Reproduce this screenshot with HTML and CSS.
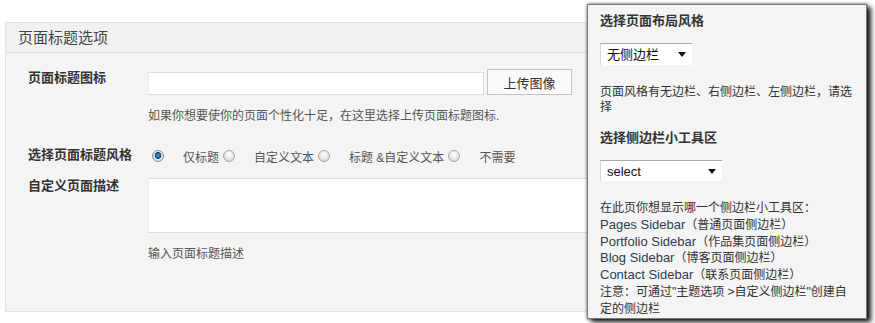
FILE: index.html
```html
<!DOCTYPE html>
<html lang="zh-CN">
<head>
  <meta charset="UTF-8">
  <title>页面标题选项</title>
  <link rel="stylesheet" href="styles.css">
</head>
<body>
  <div class="panel">
    <h3 class="panel-title">页面标题选项</h3>
    <div class="panel-body">
      <!-- 页面标题图标 -->
      <div class="row row-icon">
        <label class="row-label" for="title-icon">页面标题图标</label>
        <div class="row-field">
          <div class="upload">
            <input type="text" id="title-icon" class="text-input">
            <button type="button" class="upload-btn">上传图像</button>
          </div>
          <p class="desc">如果你想要使你的页面个性化十足，在这里选择上传页面标题图标.</p>
        </div>
      </div>

      <!-- 标题风格 -->
      <div class="row row-style">
        <span class="row-label">选择页面标题风格</span>
        <div class="row-field">
          <div class="radios">
            <label class="radio"><input type="radio" name="title-style" checked><span>仅标题</span></label>
            <label class="radio"><input type="radio" name="title-style"><span>自定义文本</span></label>
            <label class="radio"><input type="radio" name="title-style"><span>标题 &amp;自定义文本</span></label>
            <label class="radio"><input type="radio" name="title-style"><span>不需要</span></label>
          </div>
        </div>
      </div>

      <!-- 页面描述 -->
      <div class="row row-desc">
        <label class="row-label" for="title-desc">自定义页面描述</label>
        <div class="row-field">
          <textarea id="title-desc" class="text-area"></textarea>
          <p class="desc">输入页面标题描述</p>
        </div>
      </div>
    </div>
  </div>

  <!-- 侧边栏设置浮层 -->
  <div class="popup">
    <h4 class="popup-title">选择页面布局风格</h4>
    <div class="select select-layout">无侧边栏</div>
    <p class="popup-text">页面风格有无边栏、右侧边栏、左侧边栏，请选择</p>

    <h4 class="popup-title popup-title-2">选择侧边栏小工具区</h4>
    <div class="select select-widget">select</div>
    <p class="popup-list">
      在此页你想显示哪一个侧边栏小工具区：<br>
      <span class="en">Pages Sidebar</span>（普通页面侧边栏）<br>
      <span class="en">Portfolio Sidebar</span>（作品集页面侧边栏）<br>
      <span class="en">Blog Sidebar</span>（博客页面侧边栏）<br>
      <span class="en">Contact Sidebar</span>（联系页面侧边栏）<br>
      注意：可通过"主题选项 &gt;自定义侧边栏"创建自定的侧边栏
    </p>
  </div>
</body>
</html>
```

FILE: styles.css
```css
body {
  margin: 0;
  background-color: #ffffff;
  font-family: "Liberation Sans", "Noto Sans CJK SC", sans-serif;
  color: #333333;
}
.panel {
  margin: 22px 0 0 5px;
  width: 860px;
  border: 1px solid #e2e2e2;
  background-color: #f4f4f4;
}
.panel-title {
  margin: 0;
  height: 29px;
  line-height: 29px;
  padding: 0 12px;
  font-size: 15px;
  font-weight: normal;
  color: #444444;
  background-color: #f1f1f1;
  border-bottom: 1px solid #dddddd;
}
.panel-body {
  padding: 16px 0 49px 22px;
}
.row {
  display: flex;
}
.row-label {
  width: 120px;
  flex-shrink: 0;
  font-size: 13px;
  font-weight: bold;
  line-height: 16px;
  color: #333333;
}
.row-icon .row-label {
  margin-top: 1px;
}
.row-style {
  margin-top: 23px;
}
.row-desc {
  margin-top: 14px;
}
.upload {
  display: flex;
  align-items: flex-end;
}
.text-input {
  width: 336px;
  height: 23px;
  margin: 0;
  box-sizing: border-box;
  border: 1px solid #dddddd;
  border-left-color: #eeeeee;
  background-color: #ffffff;
}
.upload-btn {
  margin: 0 0 0 3px;
  width: 85px;
  height: 26px;
  box-sizing: border-box;
  border: 1px solid #c4c4c4;
  background-color: #fafafa;
  font-family: inherit;
  font-size: 13px;
  color: #333333;
  padding: 0;
}
.desc {
  margin: 13px 0 0;
  font-size: 12px;
  line-height: 16px;
  color: #555555;
}
.radios {
  display: flex;
  align-items: center;
  height: 16px;
  margin-left: 4px;
  margin-top: 1px;
}
.radio {
  display: flex;
  align-items: center;
  font-size: 12px;
  color: #555555;
  margin-right: 4px;
}
.radio input {
  appearance: none;
  -webkit-appearance: none;
  width: 12px;
  height: 12px;
  margin: 0 19px 0 0;
  box-sizing: border-box;
  border-radius: 50%;
  border: 1px solid #a8a8a8;
  background: radial-gradient(circle at 50% 35%, #ffffff 0%, #e6e6e6 55%, #c8c8c8 100%);
}
.radio input:checked {
  border-color: #8a8a8a;
  background: radial-gradient(circle at 50% 45%, #3aa0e0 0%, #1463a8 32%, #0d3f70 42%, #f2f2f2 50%, #c9c9c9 100%);
}
.text-area {
  display: block;
  width: 700px;
  height: 55px;
  margin: 0;
  box-sizing: border-box;
  border: 1px solid #f0f0f0;
  border-top-color: #dddddd;
  border-bottom-color: #dddddd;
  background-color: #ffffff;
  resize: none;
}

/* 浮层 */
.popup {
  position: absolute;
  left: 587px;
  top: 4px;
  width: 280px;
  box-sizing: border-box;
  padding: 8px 10px 0 12px;
  background-color: #f4f4f4;
  border: 1px solid #7a7a7a;
  box-shadow: 4px 3px 5px rgba(0, 0, 0, 0.9), 0 0 3px rgba(0, 0, 0, 0.6);
}
.popup-title {
  margin: 0;
  font-size: 13px;
  font-weight: bold;
  line-height: 16px;
  color: #333333;
}
.popup-title-2 {
  margin-top: 15px;
}
.select {
  position: relative;
  margin-top: 14px;
  height: 22px;
  line-height: 21px;
  box-sizing: border-box;
  padding-left: 6px;
  background-color: #ffffff;
  border-top: 1px solid #a9a9a9;
  border-left: 1px solid #d8d8d8;
  font-size: 13px;
  color: #111111;
}
.select::after {
  content: "";
  position: absolute;
  right: 6px;
  top: 8px;
  border-left: 4px solid transparent;
  border-right: 4px solid transparent;
  border-top: 5px solid #111111;
}
.select-layout {
  width: 92px;
}
.select-widget {
  width: 122px;
  height: 21px;
}
.popup-text {
  margin: 20px 0 0;
  font-size: 12px;
  line-height: 15px;
  color: #333333;
}
.popup-list {
  margin: 19px 0 0;
  font-size: 12px;
  line-height: 16.8px;
  color: #333333;
}
.en {
  font-size: 13px;
  color: #2f3b52;
}
```
